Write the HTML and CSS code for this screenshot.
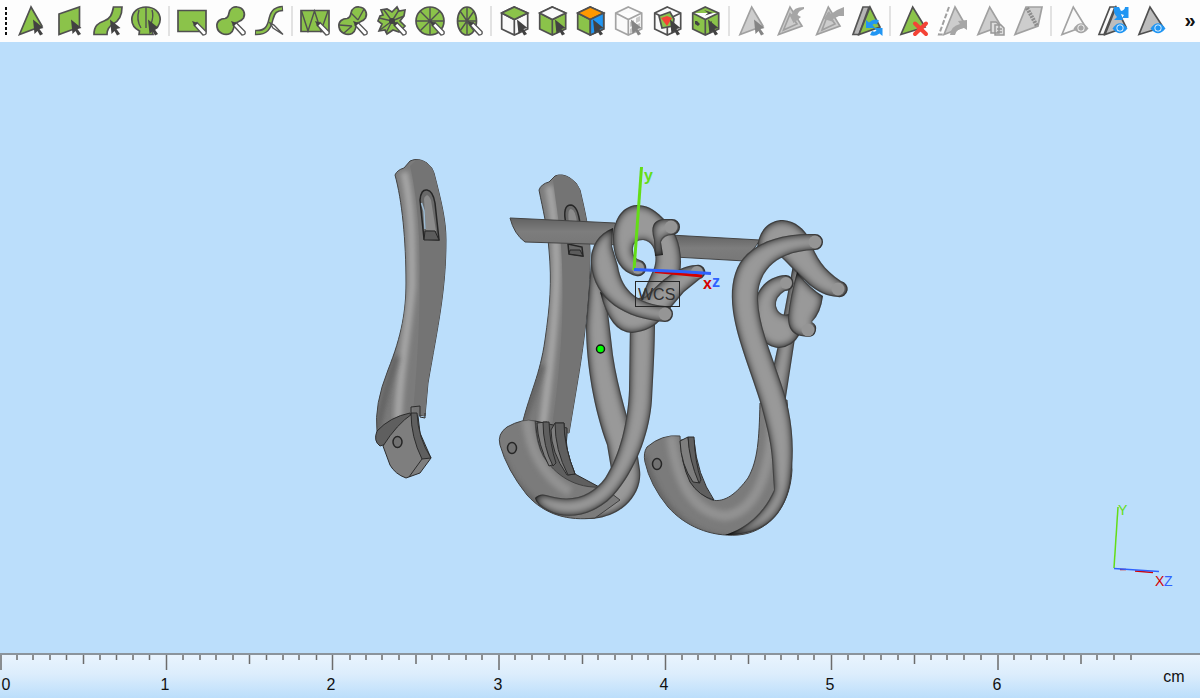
FILE: index.html
```html
<!DOCTYPE html>
<html lang="en">
<head>
<meta charset="utf-8">
<meta name="viewport" content="width=device-width, initial-scale=1">
<title>Model viewer</title>
<link rel="stylesheet" href="styles.css">
</head>
<body class="app">
<svg class="defs" aria-hidden="true">
  <defs>
    <path id="cursor" class="dark" d="M17 13.500L27.500 22 23.500 23 27 28 24 29.500 21.500 25 18.500 28z"/>
    <path id="cursor-off" class="mid" d="M17 13.500L27.500 22 23.500 23 27 28 24 29.500 21.500 25 18.500 28z"/>
    <g id="pen"><path class="pen-body" d="M17 19L20 16.500 29 25.500Q30 29 26 29z"/><path class="dark" d="M15 15L21 17 17.500 20.500z"/></g>
    <path id="cube" d="M14.300 1L27.700 7V23L14.300 29 1.700 23V7zM1.700 7L14.300 13.500 27.700 7M14.300 13.500V29"/>
    <g id="refresh"><path d="M14 22V14L17 16.500Q22 12 27 14.500L24.500 18.500Q22 17 20.500 19L23 22z"/><path d="M30.500 22V30L27.500 27.500Q23 31 18 29L20 25Q23 26.500 24.500 24.500L22 22z"/></g>
    <g id="eye"><path d="M14.500 22.500Q22 12 29.500 22.500 22 32 14.500 22.500z"/><circle cx="22" cy="22" r="3.500" fill="#fff"/><circle cx="22" cy="22" r="2.700"/></g>
    <path id="peanut" d="M13 7C14 2 18 .5 21.500 1 27 1.500 30 7 27.500 12 25 16 20 15 18.500 19 17 23 18 25 14 27.500 9 30 2 27 1 21 0 15 5 12.500 9 12.500 12 12 12.500 10 13 7z"/>
  </defs>
</svg>

<header class="toolbar" role="toolbar" aria-label="Selection tools">
  <span class="grip"></span>
  <button class="tool" aria-label="Mark triangle"><svg class="icon" viewBox="0 0 30 30"><path class="on" d="M15 1L3.500 28.500 26 20z"/><use href="#cursor"/></svg></button>
  <button class="tool" aria-label="Mark plane"><svg class="icon" viewBox="0 0 30 30"><path class="on" d="M5 8L25.500 1V21L5 28.500z"/><use href="#cursor"/></svg></button>
  <button class="tool" aria-label="Mark surface"><svg class="icon" viewBox="0 0 30 30"><path class="on" d="M20.500 1H29C29 10 26 15 20 18 15 21 14 24 14 28.500H1C1 20 5 17 11 15 17 13 19 9 20.500 1z"/><use href="#cursor"/></svg></button>
  <button class="tool" aria-label="Mark shell"><svg class="icon" viewBox="0 0 30 30"><path class="on" d="M8 28.500L8.500 25Q.8 21 .8 13.500C1 6 7 1 15 1S29 6 29.200 13.500Q29 21 21 25L22 28.500z"/><path class="line" d="M10 22Q5 14 8 4M15 22V1M20 18Q23 10 21 4"/><use href="#cursor"/></svg></button>
  <span class="divider"></span>
  <button class="tool" aria-label="Rectangle selection"><svg class="icon" viewBox="0 0 30 30"><path class="on" d="M1 4.500H29V25.500H1z"/><use href="#pen"/></svg></button>
  <button class="tool" aria-label="Freeform selection"><svg class="icon" viewBox="0 0 30 30"><use class="on" href="#peanut"/><use href="#pen"/></svg></button>
  <button class="tool" aria-label="Brush selection"><svg class="icon" viewBox="0 0 30 30"><path class="tube-line" d="M1 26.500C12 27 15 22 17 13 19 5 22 3 29 2.500"/><path class="tube-core" d="M2 26.500C12 27 15 22 17 13 19 5 22 3 28 2.500"/><path class="pen-body" d="M16 17L20 19 29 28.500 19 22z"/></svg></button>
  <span class="divider"></span>
  <button class="tool" aria-label="Rectangle through selection"><svg class="icon" viewBox="0 0 30 30"><path class="on" d="M1 4.500H29V25.500H1z"/><path class="line" d="M1.500 5L8 25 14.500 5 21 25 28 5"/><use href="#pen"/></svg></button>
  <button class="tool" aria-label="Freeform through selection"><svg class="icon" viewBox="0 0 30 30"><use class="on" href="#peanut"/><path class="line" d="M1 19L14 20M14 20L6 27M13 7L20 14M26 3L20 14"/><use href="#pen"/></svg></button>
  <button class="tool" aria-label="Smart selection"><svg class="icon" viewBox="0 0 30 30"><path class="on" d="M15 6L20 1 22 5 28 4 27 10 23 15 28 20 22 26 16 24 10 28 8 24 2 25 5 18 1 15 3 10 6 9 4 4 10 3z"/><path class="line" d="M15 15L22 4M15 15L27 10M15 15L9 27M15 15L3 24M15 15L2 12M15 15L7 4"/><circle class="dark" cx="15" cy="15" r="3"/><use href="#pen"/></svg></button>
  <button class="tool" aria-label="Circle selection"><svg class="icon" viewBox="0 0 30 30"><circle class="on" cx="15" cy="15" r="14"/><path class="line" d="M1 15H29M15 1V29M5 5L25 25M25 5L5 25"/><use href="#pen"/></svg></button>
  <button class="tool" aria-label="Ellipse selection"><svg class="icon" viewBox="0 0 30 30"><ellipse class="on" cx="14" cy="15" rx="9.500" ry="14"/><path class="line" d="M4.500 15H23.500M14 1V29M7 5L21 25M21 5L7 25"/><use href="#pen"/></svg></button>
  <span class="divider"></span>
  <button class="tool" aria-label="Select top face"><svg class="icon" viewBox="0 0 30 30"><use class="cube-plain" href="#cube"/><path class="on" d="M14.300 1L27.700 7 14.300 13.500 1.700 7z"/><use href="#cursor"/></svg></button>
  <button class="tool" aria-label="Select side faces"><svg class="icon" viewBox="0 0 30 30"><use class="on" href="#cube"/><path class="cube-plain" d="M14.300 1L27.700 7 14.300 13.500 1.700 7z"/><use href="#cursor"/></svg></button>
  <button class="tool" aria-label="Select by colour"><svg class="icon" viewBox="0 0 30 30"><use class="on" href="#cube"/><path class="orange" d="M14.300 1L27.700 7 14.300 13.500 1.700 7z"/><path class="blue-face" d="M14.300 13.500L27.700 7V23L14.300 29z"/><use href="#cursor"/></svg></button>
  <button class="tool" aria-label="Select transparent"><svg class="icon" viewBox="0 0 30 30"><use class="cube-off" href="#cube"/><path class="pale" d="M16 16L20 14V19L16 21zM21 19L26 17V21L21 23zM16 23L20 21V26L16 27zM22 12L26 10V15L22 17z"/><use href="#cursor-off"/></svg></button>
  <button class="tool" aria-label="Select inner part"><svg class="icon" viewBox="0 0 30 30"><use class="cube-plain" href="#cube"/><path class="on" d="M6 10L17 6 21 13 20 20 9 22z"/><path class="red" d="M8 12L14 10 19 12 14 20z"/><use href="#cursor"/></svg></button>
  <button class="tool" aria-label="Select whole part"><svg class="icon" viewBox="0 0 30 30"><use class="on" href="#cube"/><path class="dark" d="M13 4L22 7 14 9.500 17 7zM4 15L6 15 9 18 7 20 4 18zM18 17L21 15 20 20z"/><use href="#cursor"/></svg></button>
  <span class="divider"></span>
  <button class="tool" aria-label="Pick triangle"><svg class="icon" viewBox="0 0 30 30"><path class="off" d="M14.700 1L3 28.500 26 20z"/><use href="#cursor-off"/></svg></button>
  <button class="tool" aria-label="Grow selection"><svg class="icon" viewBox="0 0 30 30"><path class="off" d="M15 1L3.500 28.500 27 20zM15 8L8.500 24 22 18z"/><path class="gray" d="M29 1Q18 1 17 8H14L18.500 17 26 11 22.500 9Q23 5 29 3z"/></svg></button>
  <button class="tool" aria-label="Shrink selection"><svg class="icon" viewBox="0 0 30 30"><path class="off" d="M14.300 1L2.700 28.500 26 20zM14 8L8 24 21 18z"/><path class="gray" d="M30 1V10L25 10 19 13 20 16 9.500 13 15 5 17 8 23 4z"/></svg></button>
  <button class="tool" aria-label="Invert selection"><svg class="icon" viewBox="0 0 30 30"><path class="stack" d="M11 1L1 28.500H7L17 1z"/><path class="on" d="M18 1L7 28.500 28 21z"/><use class="blue" href="#refresh"/></svg></button>
  <span class="divider"></span>
  <button class="tool" aria-label="Delete marked"><svg class="icon" viewBox="0 0 30 30"><path class="on" d="M14.700 1L3 28.500 27 21z"/><path class="cross" d="M17 17.500L28 28M28 17.500L17 28"/></svg></button>
  <button class="tool" aria-label="Move marked"><svg class="icon" viewBox="0 0 30 30"><path class="dashed" d="M12 1L2 28.500H7"/><path class="off" d="M18 1L7 28.500 29 20z"/><path class="gray" d="M30 14V24L27 22Q20 22 18 29H13Q14 20 23 18L21 15z"/></svg></button>
  <button class="tool" aria-label="Copy marked"><svg class="icon" viewBox="0 0 30 30"><path class="off" d="M14.700 1L3 28.500 26 20z"/><path class="page" d="M16 16H21L24 18.500V27H16zM20 19H26L29 22V29H20zM22 23H27M22 26H27"/></svg></button>
  <button class="tool" aria-label="Split part"><svg class="icon" viewBox="0 0 30 30"><path class="off" d="M13 1H29L25 20 2 28.500z"/><path class="seam" d="M14 2L24 20"/></svg></button>
  <span class="divider"></span>
  <button class="tool" aria-label="Show triangle"><svg class="icon" viewBox="0 0 30 30"><path class="cube-off" d="M14.300 1L3 28.500 26 20z"/><use class="gray" href="#eye"/></svg></button>
  <button class="tool" aria-label="Toggle visibility"><svg class="icon" viewBox="0 0 30 30"><path class="cube-plain" d="M12 1L1 28.500H6L17 1z"/><path class="shade" d="M18 1L7 28.500 28 21z"/><path class="blue" d="M16 1H21L23 5Q27 4 27 1H30.500V12H24L26 9 23 8 25 14H16L19 11Q15 7 16 1z"/><use class="blue" href="#eye"/></svg></button>
  <button class="tool" aria-label="Show shaded"><svg class="icon" viewBox="0 0 30 30"><path class="shade" d="M14 1L3 28.500 27 21z"/><use class="blue" href="#eye"/></svg></button>
  <button class="more" aria-label="More tools">»</button>
</header>

<main class="viewport">
<svg class="scene" viewBox="0 42 1200 611" role="img" aria-label="Earring parts in 3D view">
  <defs>
    <filter id="round" filterUnits="userSpaceOnUse" x="0" y="42" width="1200" height="611" color-interpolation-filters="sRGB">
      <feGaussianBlur in="SourceAlpha" stdDeviation="4.500"/>
      <feColorMatrix values="0 0 0 .6 0  0 0 0 .6 0  0 0 0 .6 0  0 0 0 0 1" result="tone"/>
      <feComposite in="tone" in2="SourceAlpha" operator="in" result="body"/>
      <feMorphology in="SourceAlpha" operator="erode" radius="1" result="small"/>
      <feComposite in="SourceAlpha" in2="small" operator="out" result="rim"/>
      <feComponentTransfer in="rim" result="edge"><feFuncA type="linear" slope=".22"/></feComponentTransfer>
      <feMerge><feMergeNode in="body"/><feMergeNode in="edge"/></feMerge>
    </filter>
    <filter id="soft" x="-50%" y="-10%" width="200%" height="120%"><feGaussianBlur stdDeviation="2.500"/></filter>
    <linearGradient id="bar" x1="0" y1="0" x2="0" y2="1"><stop offset="0" stop-color="#626262"/><stop offset=".5" stop-color="#7d7d7d"/><stop offset="1" stop-color="#777"/></linearGradient>
    <clipPath id="clip-a"><path id="lever-a" d="M395 175Q397 170 404 168L410 161Q418 157 427 163 433 168 434 173C441 200 446 220 446 240 446 290 438 325 428 383L425 416Q400 409 377 431 374 405 388 370C402 335 406 310 406 283 406 240 402 200 395 175z"/></clipPath>
    <clipPath id="clip-b"><path id="lever-b" d="M539 190Q541 184 549 182L555 176Q562 173 570 178 577 182 580 190C586 215 590 235 590 253 590 300 583 350 577 385L569 433 550 430 523 421C530 393 540 375 545 340 550 305 552 283 549 250 547 225 543 210 539 190z"/></clipPath>
    <clipPath id="clip-c"><path id="clasp-c" d="M535 421Q523 418 507 427 497 434 500 445 507 470 527 495C545 515 568 521 595 518L620 500 603 487C575 489 555 475 543 456Q536 443 535 421z"/></clipPath>
    <clipPath id="clip-d"><path id="clasp-d" d="M680 436Q662 434 647 447 643 453 645 462 650 485 668 507C685 526 710 537 738 535 765 533 790 510 792 470L787 400 760 403C759 440 758 460 748 478 737 493 725 503 712 500 695 493 681 475 680 436z"/></clipPath>
  </defs>

  <!-- separate lever -->
  <use class="solid" href="#lever-a"/>
  <g clip-path="url(#clip-a)">
    <path class="glow" d="M404 172C412 205 412 245 412 285 409 325 400 365 398 420"/>
    <path class="flat" d="M410 166L418 158 450 160V425H412C417 370 420 320 420 270 420 230 416 190 410 166z"/>
    <path class="shadow" d="M377 431Q385 390 397 356"/>
  </g>
  <path class="slot" d="M424 239L420 200Q421 189 427 190 433 191 435 203L439 240z"/>
  <path class="glint" d="M424 199Q427 191 431 200L436 231 426 230z"/>
  <path class="sky" d="M421.500 203L424 211 425 229"/>
  <path class="slot-deep" d="M425 231H435L439 240H424z"/>
  <path class="face-dark" d="M377 431Q373 441 380 446L390 443 412 421 410 413Q390 417 377 431z"/>
  <path class="face" d="M383 446Q397 424 412 414L418 416 420 433 431 458 420 473 406 478Q395 474 390 465z"/>
  <path class="face-dark" d="M411 413L417 413Q418 438 431 458L422 459Q411 437 411 413z"/>
  <path class="outline" d="M422 459L409 477M411 414V407L420 406V417L425 418V413"/>
  <ellipse class="hole" cx="397.500" cy="442" rx="4.500" ry="5.500"/>

  <!-- attached lever -->
  <use class="solid" href="#lever-b"/>
  <g clip-path="url(#clip-b)">
    <path class="glow" d="M549 186C554 215 558 250 556 290 554 340 548 380 543 425"/>
    <path class="flat" d="M553 180L560 172 595 180V440H550C561 370 564 315 562 265 561 230 556 205 553 180z"/>
    <path class="shadow" d="M523 421Q534 390 542 365"/>
  </g>
  <path class="slot" d="M566 224Q562 205 571 205 578 206 580 224z"/>
  <path class="glint" d="M569 224Q567 209 571 209 576 210 577 224z"/>
  <path class="slot" d="M568 244L582 247 583 256 569 254z"/>
  <path class="slot-deep" d="M570 250L580 250 583 256 569 254z"/>

  <!-- middle hook -->
  <path class="tube" d="M592 250L586 325C586 365 594 410 607 445L612 475 590 500 585 519C620 520 643 495 640 470L637 450C630 425 618 390 613 355L606 295z"/>
  <path class="face-dark" d="M535 421L567 428 567 435Q564 447 575 474L603 489Q570 492 556 478 538 460 535 421z"/>
  <use class="solid" href="#clasp-c"/>
  <g clip-path="url(#clip-c)">
    <path class="glow wide" d="M527 419C529 450 545 478 570 492"/>
    <path class="shadow" d="M500 455Q520 505 570 520"/>
  </g>
  <path class="face" d="M537 423Q545 422 547 422 550 448 555 464L549 466Q538 445 537 423z"/>
  <path class="face-dark" d="M543 422H549Q550 445 556 463L553 466Q543 447 543 422z"/>
  <path class="face" d="M551 430L555 423H564Q564 447 575 474L567 475Q551 452 551 430z"/>
  <path class="face-dark" d="M555 423H564Q564 447 575 474L568 475Q555 450 555 423z"/>
  <ellipse class="hole" cx="512" cy="448" rx="4.500" ry="5.500"/>
  <path class="tube" d="M630 320H655C655 350 653 380 652 400 650 430 638 465 618 490 600 514 570 522 548 511Q536 505 535 498 540 492 550 496C575 503 593 494 605 478 620 455 628 420 629 390z"/>

  <!-- hinge pins -->
  <path class="pin" d="M510 218L615 223 622 245 525 242Q514 234 510 218z"/>
  <path class="pin" d="M670 235L760 240 745 261 675 257z"/>

  <!-- middle ring -->
  <path class="tube" d="M663 218C653 208 646 205 637 205 620 206 613 223 613 238 613 258 620 272 636 276A8 8 0 0 0 640 260Q632 258 633 248 634 240 643 240C654 241 658 256 654 268L640 300 660 312C675 295 681 278 681 262 681 242 674 228 663 218z"/>
  <path class="tube" d="M600 292Q610 333 632 333 652 331 662 318L684 292 700 279A7 7 0 0 0 696 265C676 266 662 281 645 297L625 300z"/>
  <path class="tube" d="M613 228C597 234 590 248 591 264 594 300 625 319 665 322A8 8 0 0 0 665 306C640 304 622 292 618 266L612 246z"/>
  <path class="tube" d="M654 240Q648 220 664 219H672A8 8 0 0 1 672 235Q664 235 661 242L663 255 655 256z"/>
  <circle class="cap" cx="671" cy="227" r="6.500"/>
  <circle class="cap" cx="638" cy="268" r="6"/>
  <circle class="cap" cx="697" cy="272" r="6"/>
  <circle class="cap" cx="665" cy="314" r="6.500"/>

  <!-- right hook -->
  <path class="tube" d="M793 265L805 270 794 345 784 410H764L778 345z"/>
  <use class="solid" href="#clasp-d"/>
  <g clip-path="url(#clip-d)">
    <path class="glow wide" d="M671 436C676 475 690 512 725 516 755 512 773 475 773 400"/>
    <path class="shadow" d="M643 455C654 500 685 538 730 539"/>
  </g>
  <path class="face-dark" d="M681 440H694Q697 475 714 500 699 496 690 482 681 463 681 440z"/>
  <path class="face" d="M680 441L688 437Q690 460 700 483L693 482Q681 465 680 441z"/>
  <path class="face-dark" d="M688 437H694Q695 462 701 480L699 483Q689 460 688 437z"/>
  <ellipse class="hole" cx="657" cy="464" rx="4.500" ry="5.500"/>

  <path class="tube" d="M757 250C758 230 769 220 783 220 796 221 804 229 810 239 815 256 824 270 841 281A8 8 0 0 1 838 297C815 296 803 278 782 258z"/>
  <path class="tube" d="M786 275C765 276 753 293 753 315 754 334 764 347 779 348Q793 347 800 334L789 314Q779 317 776 306 775 297 785 291A8 8 0 0 0 786 275z"/>
  <path class="tube" d="M797 272Q790 296 788 317 788 334 801 336L808 337A8 8 0 0 0 812 322Q821 313 823 296 812 290 797 272z"/>
  <path class="tube" d="M815 234C785 233 762 240 747 254 732 268 730 292 733 312 737 340 752 375 761 405 768 432 772 445 773 475L774 490C765 510 750 527 725 535 765 536 784 515 790 485 797 440 790 407 779 377 770 350 759 325 758 300 757 270 778 251 815 250A8 8 0 0 0 815 234z"/>
  <circle class="cap" cx="815" cy="242" r="6.500"/>
  <circle class="cap" cx="838" cy="289" r="6.500"/>
  <circle class="cap" cx="786" cy="283" r="6"/>
  <circle class="cap" cx="808" cy="330" r="6.500"/>

  <!-- work coordinate system -->
  <path class="axis green" d="M641.500 167L634 270"/>
  <path class="axis crimson" d="M655 271.500L702 276"/>
  <path class="axis azure" d="M634 269.500L680 271.500 711 273.500"/>
  <text class="axis-name green-text" x="644" y="181">y</text>
  <text class="axis-name crimson-text" x="703" y="289">x</text>
  <text class="axis-name azure-text" x="712" y="287">z</text>
  <rect class="tag" x="635.500" y="281.500" width="44" height="25"/>
  <text class="tag-name" x="638" y="300">WCS</text>
  <circle class="pivot" cx="600.500" cy="349" r="4"/>

  <!-- orientation gizmo -->
  <path class="axis thin green" d="M1118 507L1114 568"/>
  <path class="axis thin crimson" d="M1120 569.500H1126M1135 571L1153 572.500"/>
  <path class="axis thin azure" d="M1114 568.500L1159 571.500"/>
  <text class="gizmo-name green-text" x="1118" y="515">Y</text>
  <text class="gizmo-name crimson-text" x="1155" y="586">X</text>
  <text class="gizmo-name azure-text" x="1164" y="586">Z</text>
</svg>
</main>

<footer class="ruler">
<svg class="scale" viewBox="0 0 1200 43" role="img" aria-label="Ruler in centimetres">
  <path class="tick" d="M1 0V15M166.500 0V15M332.500 0V15M499 0V15M665.500 0V15M831.500 0V15M998 0V15"/>
  <path class="tick" d="M83.500 0V9M249.500 0V9M416 0V9M582.500 0V9M748.500 0V9M914.500 0V9M1081 0V9"/>
  <path class="tick" d="M17 0V5M33 0V5M50 0V5M66.500 0V5M100 0V5M116.500 0V5M133 0V5M149.500 0V5M183 0V5M200 0V5M216 0V5M233 0V5M266.500 0V5M283 0V5M299 0V5M316.500 0V5M350 0V5M366 0V5M382 0V5M399 0V5M432 0V5M449 0V5M466 0V5M482 0V5M515 0V5M532 0V5M549 0V5M565 0V5M598 0V5M615 0V5M632 0V5M648 0V5M682 0V5M698 0V5M715 0V5M731 0V5M765 0V5M781 0V5M798 0V5M814 0V5M848 0V5M864 0V5M881 0V5M898 0V5M931 0V5M947 0V5M964 0V5M981 0V5M1014 0V5M1031 0V5M1047 0V5M1064 0V5M1097 0V5M1114 0V5M1131 0V5"/>
  <text class="mark" x="6" y="35">0</text>
  <text class="mark" x="165" y="35">1</text>
  <text class="mark" x="331" y="35">2</text>
  <text class="mark" x="498" y="35">3</text>
  <text class="mark" x="664" y="35">4</text>
  <text class="mark" x="830" y="35">5</text>
  <text class="mark" x="997" y="35">6</text>
  <text class="mark" x="1174" y="27">cm</text>
</svg>
</footer>
</body>
</html>
```
FILE: styles.css
```css
* { box-sizing: border-box; }

.app {
  margin: 0;
  min-height: 100vh;
  display: flex;
  flex-direction: column;
  background: #bbdefb;
  font-family: "Liberation Sans", Arial, sans-serif;
}
.defs { width: 0; height: 0; position: absolute; }

/* Toolbar */
.toolbar {
  display: flex;
  align-items: center;
  height: 42px;
  background: #fdfdfd;
}
.grip {
  width: 12px;
  height: 29px;
  background: repeating-linear-gradient(#111 0 3px, transparent 3px 5px) 5px 0 / 2px 100% no-repeat;
}
.tool {
  flex: 1 1 0;
  min-width: 0;
  padding: 0;
  border: 0;
  background: none;
  display: flex;
  justify-content: center;
}
.icon { width: 30px; height: 30px; overflow: visible; }
.divider { width: 2px; height: 30px; margin: 0 3px; background: #e2e2e2; }
.more {
  width: 30px;
  padding: 0 0 2px 10px;
  border: 0;
  background: none;
  font: bold 20px "Liberation Sans", Arial, sans-serif;
  color: #111;
}

/* Icon parts */
.on, .cube-plain, .orange, .blue-face, .shade { stroke: #505050; stroke-width: 1.7px; }
.on { fill: #8bc34a; }
.cube-plain { fill: #fafafa; }
.orange { fill: #ff9800; }
.blue-face { fill: #2196f3; }
.shade { fill: #bdbdbd; }
.cube-off { fill: #fafafa; stroke: #a3a3a3; stroke-width: 1.7px; }
.off { fill: #cdcdcd; stroke: #a0a0a0; stroke-width: 1.7px; }
.stack { fill: #b5b5b5; stroke: #555; stroke-width: 1.7px; }
.line { fill: none; stroke: #505050; stroke-width: 1.4px; }
.dark { fill: #424242; }
.mid { fill: #858585; }
.gray { fill: #a6a6a6; }
.pale { fill: #c8c8c8; }
.red { fill: #f44336; }
.blue { fill: #2196f3; }
.pen-body { fill: #fff; stroke: #555; stroke-width: 1.4px; }
.tube-line { fill: none; stroke: #505050; stroke-width: 5.5px; }
.tube-core { fill: none; stroke: #8bc34a; stroke-width: 2.5px; }
.cross { fill: none; stroke: #f44336; stroke-width: 4px; stroke-linecap: round; }
.dashed { fill: none; stroke: #a0a0a0; stroke-width: 2px; stroke-dasharray: 5 2; }
.page { fill: #ddd; stroke: #989898; stroke-width: 1.5px; }
.seam { fill: none; stroke: #8c8c8c; stroke-width: 4px; stroke-dasharray: 2 1; }

/* 3D view */
.viewport { flex: 1 1 0; min-height: 0; display: flex; background: #bbdefb; }
.scene { flex: 1; width: 100%; height: 100%; min-width: 0; }
.solid { fill: #7b7b7b; stroke: #404040; stroke-width: 1px; }
.flat { fill: #747474; }
.glow { fill: none; stroke: #a5a5a5; stroke-width: 8px; filter: url(#soft); }
.wide { stroke: #929292; stroke-width: 10px; }
.shadow { fill: none; stroke: #555; stroke-width: 7px; opacity: .6; filter: url(#soft); }
.outline { fill: none; stroke: #2c2c2c; stroke-width: 1px; }
.slot { fill: #686868; stroke: #262626; stroke-width: 1.5px; }
.slot-deep { fill: #5c5c5c; stroke: #262626; stroke-width: 1px; }
.glint { fill: #8b8b8b; }
.sky { fill: none; stroke: #9dbbd3; stroke-width: 1.5px; }
.face { fill: #7e7e7e; stroke: #2c2c2c; stroke-width: 1px; }
.face-dark { fill: #5f5f5f; stroke: #2c2c2c; stroke-width: 1px; }
.hole { fill: #727272; stroke: #262626; stroke-width: 1.5px; }
.pin { fill: url(#bar); stroke: #444; stroke-width: 1px; }
.tube { fill: #777; filter: url(#round); }
.cap { fill: #959595; }

.axis { fill: none; stroke-width: 3px; }
.thin { stroke-width: 1.5px; }
.green { stroke: #64dd17; }
.crimson { stroke: #d50000; }
.azure { stroke: #2f62ff; }
.green-text { fill: #64dd17; }
.crimson-text { fill: #d50000; }
.azure-text { fill: #2f62ff; }
.axis-name { font: bold 16px "Liberation Sans", Arial, sans-serif; }
.gizmo-name { font: 14px "Liberation Sans", Arial, sans-serif; }
.tag { fill: none; stroke: #262626; stroke-width: 1px; }
.tag-name { font: 16px "Liberation Sans", Arial, sans-serif; fill: #303030; }
.pivot { fill: #0f0; stroke: #111; stroke-width: 1.5px; }

/* Ruler */
.ruler {
  border-top: 2px solid #8b949c;
  background: linear-gradient(#e9f4fe, #dcedfc 45%, #bbdefb);
}
.scale { display: block; width: 100%; height: auto; }
.tick { stroke: #6c6c6c; stroke-width: 1.5px; }
.mark {
  font: 16px "Liberation Sans", Arial, sans-serif;
  fill: #111;
  text-anchor: middle;
}
```
